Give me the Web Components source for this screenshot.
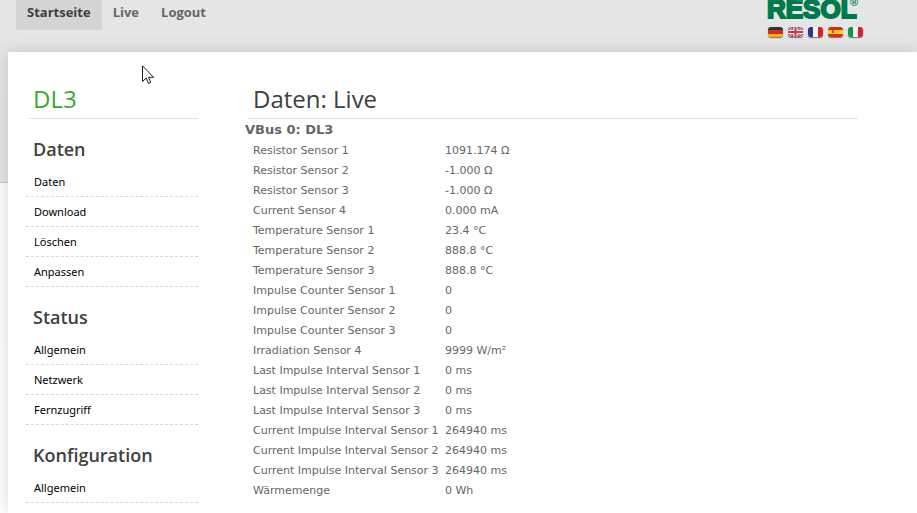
<!DOCTYPE html>
<html lang="de">
<head>
<meta charset="utf-8">
<title>DL3 - Daten: Live</title>
<style>
    body {
        background: linear-gradient(#e6e6e6, #e3e3e3 182px, #c8c8c8 182px, #c8c8c8 183px, #fcfcfc 183px, #ffffff 513px) no-repeat;
        color: #666666;
        font-family: Verdana, "DejaVu Sans", sans-serif;
        font-size: 11px;
        margin: 0;
    }
</style>
</head>
<body>
<datalogger-page>
    <site-header slot="header">
        <nav-tab href="#start" label="Startseite" active></nav-tab>
        <nav-tab href="#live" label="Live"></nav-tab>
        <nav-tab href="#logout" label="Logout"></nav-tab>
        <resol-logo slot="brand"></resol-logo>
        <language-flags slot="brand"></language-flags>
    </site-header>
    <page-title slot="sidebar" class="device" label="DL3"></page-title>
    <side-menu slot="sidebar" label="Daten" items="Daten,Download,Löschen,Anpassen"></side-menu>
    <side-menu slot="sidebar" label="Status" items="Allgemein,Netzwerk,Fernzugriff"></side-menu>
    <side-menu slot="sidebar" label="Konfiguration" items="Allgemein"></side-menu>
    <page-title label="Daten: Live"></page-title>
    <sensor-table label="VBus 0: DL3"></sensor-table>
</datalogger-page>
<mouse-pointer></mouse-pointer>

<script>
(function() {
    function define(name, html, setup) {
        const template = document.createElement("template");
        template.innerHTML = html;

        customElements.define(name, class extends HTMLElement {
            constructor() {
                super();

                this.attachShadow({ mode: "open" });
                this.shadowRoot.append(template.content.cloneNode(true));
            }

            connectedCallback() {
                if (setup) setup(this, this.shadowRoot);
            }
        });
    }

    /* Page frame */
    define("datalogger-page", `
    <style>
    :host {
        display: block;
    }

    .sheet {
        background-color: #ffffff;
        box-shadow: 0 0 16px rgba(0, 0, 0, 0.15);
        box-sizing: border-box;
        column-gap: 50px;
        display: grid;
        grid-template-columns: 172px minmax(0, 610px);
        margin-left: 8px;
        min-height: calc(100vh - 52px);
        padding: 30px 18px 0;
    }

    main {
        min-width: 0;
    }
    </style>
    <slot name="header"></slot>
    <div class="sheet">
        <aside><slot name="sidebar"></slot></aside>
        <main><slot></slot></main>
    </div>
    `);

    /* Header */
    define("site-header", `
    <style>
    :host {
        display: flex;
        height: 52px;
        justify-content: space-between;
        padding: 0 54px 0 16px;
    }

    nav {
        display: flex;
        height: 30px;
    }

    .brand {
        display: flex;
        flex-direction: column;
        gap: 7px;
    }
    </style>
    <nav><slot></slot></nav>
    <div class="brand"><slot name="brand"></slot></div>
    `);

    define("nav-tab", `
    <style>
    :host {
        display: flex;
    }

    a {
        color: #666666;
        font-family: "Trebuchet MS", "Open Sans", sans-serif;
        font-size: 13px;
        font-weight: 700;
        line-height: 24px;
        padding: 0 11px;
        text-decoration: none;
    }

    :host([active]) a {
        background-color: #d4d4d4;
        color: #404040;
    }
    </style>
    <a></a>
    `, (host, root) => {
        const link = root.querySelector("a");
        link.href = host.getAttribute("href");
        link.textContent = host.getAttribute("label");
    });

    define("resol-logo", `
    <style>
    :host {
        display: block;
        height: 20px;
    }

    svg {
        display: block;
    }

    text {
        fill: #007a4d;
        font-family: "Liberation Sans", Arial, sans-serif;
        font-weight: 700;
    }
    </style>
    <svg width="96" height="20" role="img" aria-label="RESOL">
        <text x="0" y="18" font-size="26" stroke="#007a4d" stroke-width="2">RESOL</text>
        <text x="83" y="6" font-size="11">®</text>
    </svg>
    `);

    define("language-flags", `
    <style>
    :host {
        display: flex;
        gap: 5px;
        padding-left: 1px;
    }

    a {
        border-radius: 3px;
        box-shadow: 0 1px 1px rgba(0, 0, 0, 0.5);
        display: block;
        height: 10px;
        overflow: hidden;
        width: 15px;
    }

    svg {
        display: block;
    }
    </style>
    <a href="#de" aria-label="Deutsch"><svg width="15" height="10"><path fill="#3a3230" d="M0 0h15v3H0z"/><path fill="#d92a1c" d="M0 3h15v4H0z"/><path fill="#f0b800" d="M0 7h15v3H0z"/></svg></a>
    <a href="#en" aria-label="English"><svg width="15" height="10"><path fill="#4a5ca6" d="M0 0h15v10H0z"/><path stroke="#e8e8f0" stroke-width="2" d="M0 0l15 10M15 0L0 10"/><path stroke="#d33" d="M0 0l15 10M15 0L0 10"/><path stroke="#f4f0f4" stroke-width="4" d="M7.500 0v10M0 5h15"/><path stroke="#d33" stroke-width="2" d="M7.500 0v10M0 5h15"/></svg></a>
    <a href="#fr" aria-label="Français"><svg width="15" height="10"><path fill="#2b3a86" d="M0 0h5v10H0z"/><path fill="#f6f6f6" d="M5 0h5v10H5z"/><path fill="#d8232a" d="M10 0h5v10h-5z"/></svg></a>
    <a href="#es" aria-label="Español"><svg width="15" height="10"><path fill="#d8291c" d="M0 0h15v10H0z"/><path fill="#fbd213" d="M0 3h15v4H0z"/><path fill="#c5541c" d="M4 3h2v3H4z"/></svg></a>
    <a href="#it" aria-label="Italiano"><svg width="15" height="10"><path fill="#13954b" d="M0 0h5v10H0z"/><path fill="#f6f6f6" d="M5 0h5v10H5z"/><path fill="#d8232a" d="M10 0h5v10h-5z"/></svg></a>
    `);

    /* Titles */
    define("page-title", `
    <style>
    :host {
        color: #404040;
        display: block;
    }

    :host(.device) {
        color: #3fa535;
    }

    h1 {
        border-bottom: 1px solid #e5e5e5;
        font-family: "Trebuchet MS", "Open Sans", sans-serif;
        font-size: 24px;
        font-weight: 400;
        line-height: 34px;
        margin: 0;
        padding: 0 0 2px 5px;
    }

    :host(.device) h1 {
        margin-left: 2px;
    }
    </style>
    <h1></h1>
    `, (host, root) => {
        root.querySelector("h1").textContent = host.getAttribute("label");
    });

    /* Sidebar menu */
    define("side-menu", `
    <style>
    :host {
        display: block;
        padding-top: 16px;
    }

    h2 {
        color: #404040;
        font-family: "Trebuchet MS", "Open Sans", sans-serif;
        font-size: 18px;
        font-weight: 600;
        line-height: 28px;
        margin: 0;
        padding-left: 7px;
    }

    ul {
        list-style: none;
        margin: 4px 0 0;
        padding: 0;
    }

    a {
        border-bottom: 1px dashed #d8d8d8;
        color: #000000;
        display: block;
        font-family: Tahoma, "Noto Sans", sans-serif;
        font-size: 11px;
        line-height: 29px;
        padding-left: 8px;
        text-decoration: none;
    }
    </style>
    <h2></h2>
    <ul></ul>
    `, (host, root) => {
        root.querySelector("h2").textContent = host.getAttribute("label");
        host.getAttribute("items").split(",").forEach(item => {
            const li = document.createElement("li");
            const link = document.createElement("a");
            link.href = "#" + item.toLowerCase();
            link.textContent = item;
            li.append(link);
            root.querySelector("ul").append(li);
        });
    });

    /* Sensor data */
    const values = [
        ["Resistor Sensor 1", "1091.174 Ω"],
        ["Resistor Sensor 2", "-1.000 Ω"],
        ["Resistor Sensor 3", "-1.000 Ω"],
        ["Current Sensor 4", "0.000 mA"],
        ["Temperature Sensor 1", "23.4 °C"],
        ["Temperature Sensor 2", "888.8 °C"],
        ["Temperature Sensor 3", "888.8 °C"],
        ["Impulse Counter Sensor 1", "0"],
        ["Impulse Counter Sensor 2", "0"],
        ["Impulse Counter Sensor 3", "0"],
        ["Irradiation Sensor 4", "9999 W/m²"],
        ["Last Impulse Interval Sensor 1", "0 ms"],
        ["Last Impulse Interval Sensor 2", "0 ms"],
        ["Last Impulse Interval Sensor 3", "0 ms"],
        ["Current Impulse Interval Sensor 1", "264940 ms"],
        ["Current Impulse Interval Sensor 2", "264940 ms"],
        ["Current Impulse Interval Sensor 3", "264940 ms"],
        ["Wärmemenge", "0 Wh"]
    ];

    define("sensor-table", `
    <style>
    :host {
        display: block;
        margin-left: -3px;
    }

    table {
        border-collapse: collapse;
        line-height: 20px;
    }

    caption {
        font-size: 13px;
        font-weight: 700;
        line-height: 22px;
        text-align: left;
    }

    th, td {
        font-weight: 400;
        padding: 0;
        text-align: left;
        white-space: nowrap;
    }

    th {
        min-width: 192px;
        padding-left: 8px;
    }
    </style>
    <table>
        <caption></caption>
        <tbody></tbody>
    </table>
    `, (host, root) => {
        root.querySelector("caption").textContent = host.getAttribute("label");
        values.forEach(([name, value]) => {
            const row = root.querySelector("tbody").insertRow();
            const head = document.createElement("th");
            head.scope = "row";
            head.textContent = name;
            row.append(head);
            row.insertCell().textContent = value;
        });
    });

    /* Pointer, lies over the sheet */
    define("mouse-pointer", `
    <style>
    :host {
        left: 142px;
        pointer-events: none;
        position: absolute;
        top: 65px;
    }

    svg {
        display: block;
    }
    </style>
    <svg width="13" height="20" aria-hidden="true">
        <path fill="#fff" stroke="#1b1b2b" d="M.5.800v15.700l3.700-3.500 2.300 5.500 2.300-1-2.300-5.200h5z"/>
    </svg>
    `);
})();
</script>
</body>
</html>
